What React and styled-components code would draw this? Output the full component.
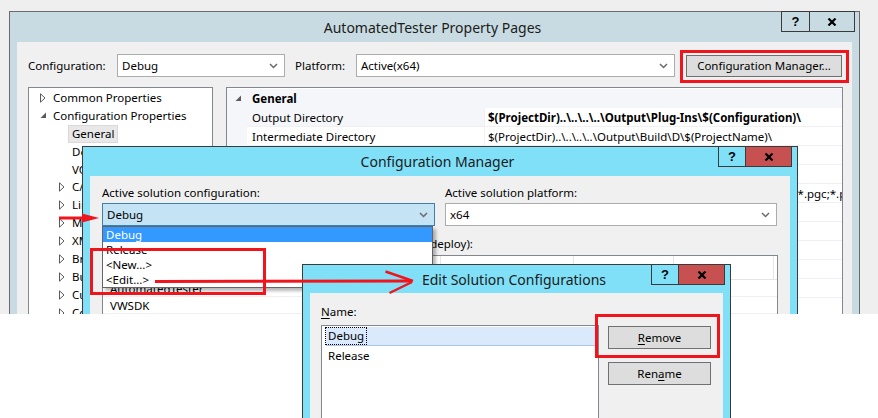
import React from "react";
import styled, { createGlobalStyle } from "styled-components";

const GlobalStyle = createGlobalStyle`
  html, body {
    margin: 0;
    padding: 0;
    background: #ffffff;
  }
  body {
    font-family: "Noto Sans", "Open Sans", sans-serif;
    font-size: 11.5px;
    color: #000;
  }
  * {
    box-sizing: border-box;
  }
`;

const RED = "#f0141c";

const Stage = styled.div`
  position: relative;
  width: 878px;
  height: 418px;
  overflow: hidden;
  background: #fff;
`;

const Desktop = styled.div`
  position: relative;
  isolation: isolate;
  height: 314px;
  overflow: hidden;
  background: #efeff0;
`;

/* windows sit on a free desktop, so they keep their own coordinates */
const Window = styled.div`
  position: absolute;
  left: ${(p) => p.$x}px;
  top: ${(p) => p.$y}px;
  width: ${(p) => p.$w}px;
  height: ${(p) => p.$h}px;
  border: 1px solid ${(p) => p.$line || "#5e5e5e"};
  background: ${(p) => p.$frame};
  display: flex;
  flex-direction: column;
`;

const TitleBar = styled.div`
  height: ${(p) => p.$h}px;
  flex: none;
  display: grid;
  grid-template-columns: 1fr auto 1fr;
  align-items: center;
  padding-right: ${(p) => p.$right || 5}px;
`;

const Title = styled.div`
  grid-column: 2;
  font-size: 14px;
  color: #1b1b1b;
  white-space: nowrap;
`;

const Captions = styled.div`
  grid-column: 3;
  justify-self: end;
  align-self: start;
  margin-top: -1px;
  display: flex;
`;

const CaptionButton = styled.div`
  width: ${(p) => p.$w}px;
  height: 21px;
  border: 1px solid #3a3a3a;
  margin-left: -1px;
  background: ${(p) => p.$bg || "transparent"};
  display: flex;
  align-items: center;
  justify-content: center;
  font-family: "Liberation Sans", Arial, sans-serif;
  font-weight: bold;
  font-size: 13px;
  color: #000;
`;

const Client = styled.div`
  flex: 1;
  margin: 0 7px 7px;
  background: #f0f0f0;
  padding: ${(p) => p.$pad};
  display: flex;
  flex-direction: column;
  min-height: 0;
`;

/* ---------- common controls ---------- */

const Row = styled.div`
  display: flex;
  align-items: center;
`;

const Label = styled.div`
  width: ${(p) => (p.$w ? `${p.$w}px` : "auto")};
  margin-left: ${(p) => p.$ml || 0}px;
  flex: none;
  white-space: nowrap;
  line-height: 16px;
`;

const Combo = styled.div`
  width: ${(p) => (p.$w ? `${p.$w}px` : "100%")};
  height: 23px;
  flex: none;
  border: 1px solid ${(p) => (p.$focus ? "#3c7fb1" : "#acacac")};
  background: ${(p) => (p.$focus ? "#c4e4f5" : "#fff")};
  display: flex;
  align-items: center;
  justify-content: space-between;
  padding: 0 6px 0 4px;
  white-space: nowrap;
`;

const PushButton = styled.div`
  width: ${(p) => p.$w}px;
  height: ${(p) => p.$h || 23}px;
  margin-left: ${(p) => p.$ml || 0}px;
  flex: none;
  border: 1px solid #707070;
  background: #dddddd;
  display: flex;
  align-items: center;
  justify-content: center;
  white-space: nowrap;
`;

const Key = styled.span`
  text-decoration: underline;
  text-underline-offset: 2px;
`;

const Chevron = () => (
  <svg width="9" height="6" viewBox="0 0 9 6">
    <path d="M1 1 L4.5 4.5 L8 1" fill="none" stroke="#6a6a6a" strokeWidth="1.5" />
  </svg>
);

const CloseIcon = () => (
  <svg width="10" height="8" viewBox="0 0 10 8">
    <path d="M1.5 0.5 L8.5 7.5 M8.5 0.5 L1.5 7.5" fill="none" stroke="#000" strokeWidth="2.2" />
  </svg>
);

/* ---------- property pages: tree ---------- */

const Panels = styled.div`
  display: flex;
  gap: 13px;
  margin-top: 10px;
  flex: 1;
  min-height: 0;
`;

const Tree = styled.div`
  width: 185px;
  flex: none;
  border: 1px solid #828790;
  background: #fff;
  padding-top: 1px;
`;

const TreeRow = styled.div`
  height: 17.9px;
  display: flex;
  align-items: center;
  padding-left: ${(p) => 11 + p.$level * 19}px;
  white-space: nowrap;
`;

const Expander = styled.span`
  width: 12px;
  flex: none;
  display: flex;
  align-items: center;
`;

const TreeText = styled.span`
  padding: 0 3px;
  line-height: 16px;
  border: 1px solid ${(p) => (p.$selected ? "#d9d9d9" : "transparent")};
  background: ${(p) => (p.$selected ? "#e8e8e8" : "transparent")};
  margin-left: -3px;
`;

const Closed = () => (
  <svg width="6" height="10" viewBox="0 0 6 10">
    <path d="M0.5 0.8 L5 5 L0.5 9.2 Z" fill="none" stroke="#5a5a5a" strokeWidth="1" />
  </svg>
);

const Opened = () => (
  <svg width="7" height="7" viewBox="0 0 7 7">
    <path d="M6 0.5 L6 6 L0.5 6 Z" fill="#5a5a5a" />
  </svg>
);

/* ---------- property pages: grid ---------- */

const PropGrid = styled.div`
  width: 617px;
  flex: none;
  border: 1px solid #828790;
  background: #fff;
  padding-top: 1px;
`;

const PropRow = styled.div`
  display: grid;
  grid-template-columns: 20px 237px 1fr;
  height: 19px;
`;

const Gutter = styled.div`
  background: #f4f6fa;
  display: flex;
  align-items: center;
  justify-content: center;
  padding-left: 3px;
`;

const Category = styled.div`
  grid-column: 2 / 4;
  background: #f4f6fa;
  font-weight: bold;
  padding-left: 5px;
  display: flex;
  align-items: center;
`;

const PropName = styled.div`
  padding-left: 5px;
  display: flex;
  align-items: center;
  white-space: nowrap;
  background: ${(p) => (p.$shade ? "#f4f6fa" : "#fff")};
  border-bottom: 1px solid #f0f0f0;
`;

const PropValue = styled.div`
  padding-left: 3px;
  display: flex;
  align-items: center;
  white-space: nowrap;
  overflow: hidden;
  font-weight: ${(p) => (p.$bold ? "bold" : "normal")};
  border-left: 1px solid #f0f0f0;
  border-bottom: 1px solid #f0f0f0;
`;

/* ---------- configuration manager ---------- */

const TwoCols = styled.div`
  display: grid;
  grid-template-columns: 333px 332px;
  column-gap: 10px;
`;

const Field = styled.div`
  display: flex;
  flex-direction: column;
  gap: 2px;
  position: relative;
`;

const DropList = styled.div`
  position: absolute;
  left: 0;
  top: 41px;
  width: 331px;
  border: 1px solid #646464;
  background: #fff;
  box-shadow: 3px 3px 3px rgba(0, 0, 0, 0.28);
  z-index: 2;
`;

const DropItem = styled.div`
  height: 15px;
  line-height: 15px;
  padding-left: 3px;
  background: ${(p) => (p.$selected ? "#3399ff" : "transparent")};
  color: ${(p) => (p.$selected ? "#fff" : "#000")};
`;

const ContextsLabel = styled.div`
  margin-top: 10px;
  line-height: 16px;
  white-space: nowrap;
`;

const ContextGrid = styled.div`
  margin-top: 3px;
  width: 676px;
  border: 1px solid #828790;
  background: #fff;
  flex: 1;
`;

const GridLine = styled.div`
  display: grid;
  grid-template-columns: 200px 138px 133px 100px 100px 1fr;
  height: ${(p) => p.$h}px;
  border-bottom: 1px solid ${(p) => (p.$head ? "#e5e5e5" : "#f0f0f0")};
`;

const Cell = styled.div`
  padding-left: ${(p) => (p.$head ? 6 : 7)}px;
  display: flex;
  align-items: center;
  white-space: nowrap;
  overflow: hidden;
  border-right: ${(p) => (p.$head ? "1px solid #e5e5e5" : "none")};
`;

/* ---------- edit solution configurations ---------- */

const EditBody = styled.div`
  display: flex;
  gap: 9px;
  margin-top: 5px;
  flex: 1;
`;

const NameList = styled.div`
  width: 278px;
  border: 1px solid #828790;
  background: #fff;
  padding: 1px 0 0 4px;
`;

const NameItem = styled.div`
  height: 19px;
  display: flex;
  align-items: center;
  background: ${(p) => (p.$selected ? "#dbe9fc" : "transparent")};
  border-bottom: 1px solid ${(p) => (p.$selected ? "#a8c8ee" : "transparent")};
  margin-bottom: 1px;
`;

const FocusText = styled.span`
  padding: 0 2px;
  line-height: 16px;
  outline: ${(p) => (p.$focus ? "1px dotted #000" : "none")};
  outline-offset: 0;
`;

const ButtonStack = styled.div`
  display: flex;
  flex-direction: column;
  gap: 13px;
  padding-top: 1px;
`;

/* ---------- annotations drawn over the screenshot ---------- */

const Highlight = styled.div`
  position: absolute;
  left: ${(p) => p.$x}px;
  top: ${(p) => p.$y}px;
  width: ${(p) => p.$w}px;
  height: ${(p) => p.$h}px;
  border: 3px solid ${RED};
  pointer-events: none;
`;

const Markup = styled.svg`
  position: absolute;
  left: 0;
  top: 0;
  pointer-events: none;
`;

const treeItems = [
  { level: 0, icon: "closed", text: "Common Properties" },
  { level: 0, icon: "open", text: "Configuration Properties" },
  { level: 1, text: "General", selected: true },
  { level: 1, text: "Debugging" },
  { level: 1, text: "VC++ Directories" },
  { level: 1, icon: "closed", text: "C/C++" },
  { level: 1, icon: "closed", text: "Linker" },
  { level: 1, icon: "closed", text: "Manifest Tool" },
  { level: 1, icon: "closed", text: "XML Document Generator" },
  { level: 1, icon: "closed", text: "Browse Information" },
  { level: 1, icon: "closed", text: "Build Events" },
  { level: 1, icon: "closed", text: "Custom Build Step" },
  { level: 1, icon: "closed", text: "Code Analysis" },
];

const props = [
  { name: "Output Directory", value: "$(ProjectDir)..\\..\\..\\..\\Output\\Plug-Ins\\$(Configuration)\\", bold: true, shade: true },
  { name: "Intermediate Directory", value: "$(ProjectDir)..\\..\\..\\..\\Output\\Build\\D\\$(ProjectName)\\" },
  { name: "Target Name", value: "$(ProjectName)" },
  { name: "Target Extension", value: ".dll" },
  { name: "Extensions to Delete on Clean", value: "*.cdf;*.cache;*.obj;*.ilk;*.resources;*.tlb;*.tlh;*.tmp;*.rsp;*.pgc;*.pgd;*.meta" },
  { name: "Build Log File", value: "$(IntDir)\\$(MSBuildProjectName).log" },
  { name: "Platform Toolset", value: "Visual Studio 2012 (v110)" },
  { name: "Enable Managed Incremental Build", value: "No" },
  { name: "Configuration Type", value: "Dynamic Library (.dll)" },
  { name: "Use of MFC", value: "Use Standard Windows Libraries" },
];

export default function App() {
  return (
    <>
      <GlobalStyle />
      <Stage>
        <Desktop>
          <Window $x={9} $y={11} $w={851} $h={330} $frame="#c9dbe2" $line="#6b6b6b">
            <TitleBar $h={30} $right={4}>
              <Title>AutomatedTester Property Pages</Title>
              <Captions>
                <CaptionButton $w={29}>?</CaptionButton>
                <CaptionButton $w={46}>
                  <CloseIcon />
                </CaptionButton>
              </Captions>
            </TitleBar>
            <Client $pad="12px 10px 0 11px">
              <Row>
                <Label $w={89}>Configuration:</Label>
                <Combo $w={168}>
                  Debug
                  <Chevron />
                </Combo>
                <Label $w={61} $ml={10}>Platform:</Label>
                <Combo $w={319}>
                  Active(x64)
                  <Chevron />
                </Combo>
                <PushButton $w={156} $h={22} $ml={11}>
                  Configuration Manager...
                </PushButton>
              </Row>
              <Panels>
                <Tree>
                  {treeItems.map((t) => (
                    <TreeRow key={t.text} $level={t.level}>
                      <Expander>
                        {t.icon === "closed" && <Closed />}
                        {t.icon === "open" && <Opened />}
                      </Expander>
                      <TreeText $selected={t.selected}>{t.text}</TreeText>
                    </TreeRow>
                  ))}
                </Tree>
                <PropGrid>
                  <PropRow>
                    <Gutter>
                      <Opened />
                    </Gutter>
                    <Category>General</Category>
                  </PropRow>
                  {props.map((p) => (
                    <PropRow key={p.name}>
                      <Gutter />
                      <PropName $shade={p.shade}>{p.name}</PropName>
                      <PropValue $bold={p.bold}>{p.value}</PropValue>
                    </PropRow>
                  ))}
                </PropGrid>
              </Panels>
            </Client>
          </Window>

          <Window $x={82} $y={146} $w={716} $h={300} $frame="#80e0f8" $line="#3b3b3b">
            <TitleBar $h={29}>
              <Title>Configuration Manager</Title>
              <Captions>
                <CaptionButton $w={28}>?</CaptionButton>
                <CaptionButton $w={47} $bg="#c75050">
                  <CloseIcon />
                </CaptionButton>
              </Captions>
            </TitleBar>
            <Client $pad="9px 14px 0 12px">
              <TwoCols>
                <Field>
                  <Label>Active solution configuration:</Label>
                  <Combo $focus>
                    Debug
                    <Chevron />
                  </Combo>
                  <DropList>
                    <DropItem $selected>Debug</DropItem>
                    <DropItem>Release</DropItem>
                    <DropItem>&lt;New...&gt;</DropItem>
                    <DropItem>&lt;Edit...&gt;</DropItem>
                  </DropList>
                </Field>
                <Field>
                  <Label>Active solution platform:</Label>
                  <Combo>
                    x64
                    <Chevron />
                  </Combo>
                </Field>
              </TwoCols>
              <ContextsLabel>
                Project contexts (check the project configurations to build or deploy):
              </ContextsLabel>
              <ContextGrid>
                <GridLine $h={24} $head>
                  <Cell $head>Project</Cell>
                  <Cell $head>Configuration</Cell>
                  <Cell $head>Platform</Cell>
                  <Cell $head>Build</Cell>
                  <Cell $head>Deploy</Cell>
                  <Cell />
                </GridLine>
                <GridLine $h={17}>
                  <Cell>AutomatedTester</Cell>
                  <Cell>Debug</Cell>
                  <Cell>x64</Cell>
                  <Cell />
                  <Cell />
                  <Cell />
                </GridLine>
                <GridLine $h={17}>
                  <Cell>VWSDK</Cell>
                  <Cell>Debug</Cell>
                  <Cell>x64</Cell>
                  <Cell />
                  <Cell />
                  <Cell />
                </GridLine>
              </ContextGrid>
            </Client>
          </Window>
        </Desktop>

        <Window $x={302} $y={264} $w={429} $h={200} $frame="#80e0f8" $line="#3b3b3b">
          <TitleBar $h={28}>
            <Title>Edit Solution Configurations</Title>
            <Captions>
              <CaptionButton $w={28}>?</CaptionButton>
              <CaptionButton $w={47} $bg="#c75050">
                <CloseIcon />
              </CaptionButton>
            </Captions>
          </TitleBar>
          <Client $pad="11px 12px 0 11px">
            <Label>
              <Key>N</Key>ame:
            </Label>
            <EditBody>
              <NameList>
                <NameItem $selected>
                  <FocusText $focus>Debug</FocusText>
                </NameItem>
                <NameItem>
                  <FocusText>Release</FocusText>
                </NameItem>
              </NameList>
              <ButtonStack>
                <PushButton $w={103}>
                  <Key>R</Key>emove
                </PushButton>
                <PushButton $w={103}>
                  Ren<Key>a</Key>me
                </PushButton>
              </ButtonStack>
            </EditBody>
          </Client>
        </Window>

        <Highlight $x={680} $y={50} $w={169} $h={33} />
        <Highlight $x={90} $y={248} $w={176} $h={47} />
        <Highlight $x={595} $y={314} $w={125} $h={44} />

        <Markup width="878" height="418" viewBox="0 0 878 418">
          <line x1="59" y1="218" x2="86" y2="218" stroke={RED} strokeWidth="3" />
          <path d="M82 213.5 L99 218 L82 222.5 Z" fill={RED} />
          <line x1="155" y1="281.5" x2="412" y2="281" stroke={RED} strokeWidth="3" />
          <path d="M385.5 271.5 L413 281" stroke={RED} strokeWidth="2.4" fill="none" />
          <path d="M389.5 293 L412 282" stroke={RED} strokeWidth="2.4" fill="none" />
        </Markup>
      </Stage>
    </>
  );
}
